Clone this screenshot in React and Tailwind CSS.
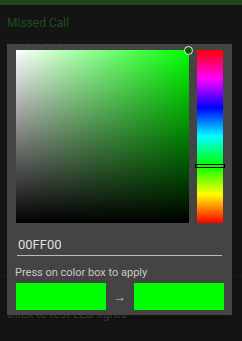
export default function App() {
  return (
    <div className="relative w-[242px] h-[341px] overflow-hidden bg-[#141414] font-['Roboto',sans-serif]">
      <div className="h-[5px] bg-[#1e4620]" />
      <div className="px-[7px] pt-[11px] text-[12px] leading-[14px] text-[#1d4d20]">Missed Call</div>
      <div className="px-[7px] pt-[12px] text-[12px] leading-[14px] text-[#3a3a3a]">Enable lights</div>
      <div className="mt-[220px] h-px bg-[#1c1c1c]" />
      <div className="px-[7px] pt-[30px] text-[12px] leading-[14px] text-[#3a3a3a]">Click to test LED lights</div>

      <div className="absolute left-[7px] top-[44px] w-[225px] h-[271px] bg-[#444444] shadow-md">
        <div className="flex gap-[8px] pl-[9px] pt-[6px]">
          <div className="relative w-[173px] h-[173px] bg-[linear-gradient(to_right,#ffffff,#00ff00)]">
            <div className="absolute inset-0 bg-[linear-gradient(to_bottom,rgba(0,0,0,0),#000000)]" />
            <div className="absolute -right-[4px] -top-[4px] w-[9px] h-[9px] rounded-full border border-[#eee] bg-[#0a5a0a]" />
          </div>
          <div className="relative w-[26px] h-[173px] bg-[linear-gradient(to_bottom,#ff0000,#ff00ff,#0000ff,#00ffff,#00ff00,#ffff00,#ff0000)]">
            <div className="absolute -left-[2px] -right-[2px] top-[114px] h-[4px] border border-black" />
          </div>
        </div>
        <div className="mx-[10px] mt-[14px] border-b border-[#bbb] pb-[2px] pl-px text-[13px] leading-[16px] text-[#e0e0e0]">00FF00</div>
        <div className="pl-[8px] pt-[10px] text-[11px] leading-[13px] text-[#c8c8c8]">Press on color box to apply</div>
        <div className="flex items-center pl-[9px] pt-[4px]">
          <div className="w-[90px] h-[27px] bg-[#00ff00]" />
          <div className="w-[28px] text-center text-[12px] text-[#ccc]">→</div>
          <div className="w-[90px] h-[27px] bg-[#00ff00]" />
        </div>
      </div>
    </div>
  )
}
